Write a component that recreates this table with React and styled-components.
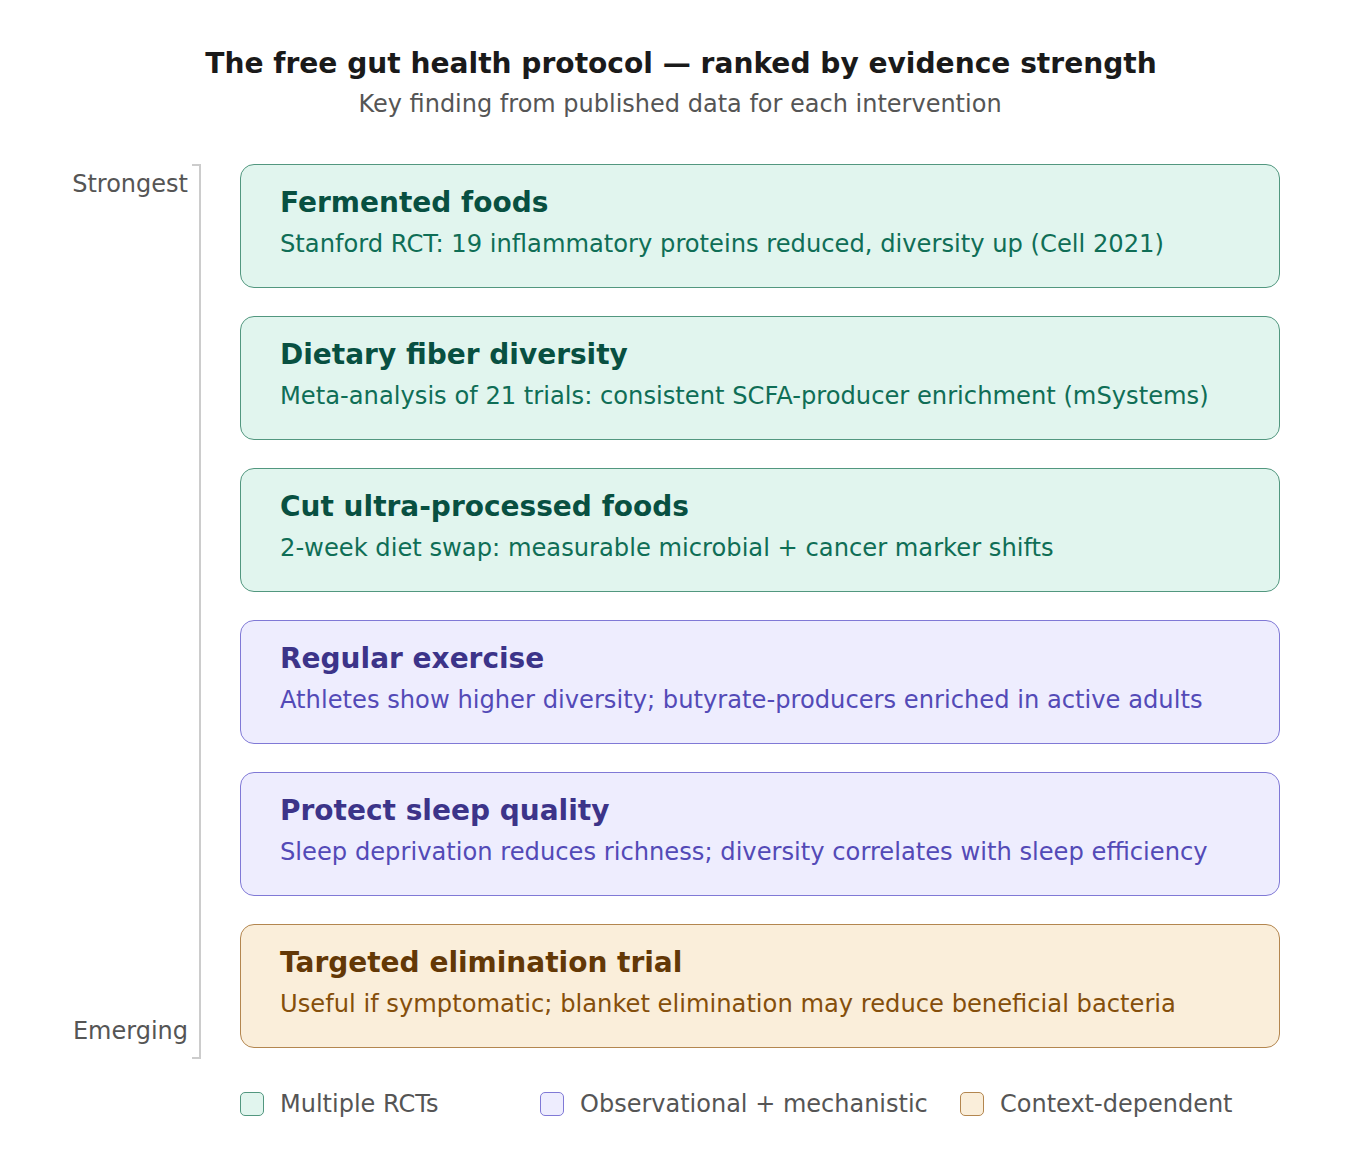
import styled, { createGlobalStyle } from "styled-components";

const GlobalStyle = createGlobalStyle`
  body {
    margin: 0;
    background: #ffffff;
    font-family: "DejaVu Sans", "Liberation Sans", sans-serif;
  }
`;

const tones = {
  green: { fill: "#e1f5ee", border: "#52977f", title: "#085041", text: "#0f6e56" },
  purple: { fill: "#eeedfe", border: "#8079d6", title: "#3c3489", text: "#534ab7" },
  amber: { fill: "#faeeda", border: "#b3864f", title: "#633806", text: "#854f0b" },
};

const PageStyle = styled.main`
  width: 1360px;
  padding: 46px 0 40px;
  box-sizing: border-box;
`;

const HeaderStyle = styled.header`
  text-align: center;
  margin-bottom: 45px;

  h1 {
    margin: 0;
    font-size: 28.1px;
    line-height: 36px;
    font-weight: 700;
    color: #1a1a1a;
    padding-left: 2px;
  }

  p {
    margin: 7px 0 0;
    font-size: 24px;
    line-height: 30px;
    color: #555555;
  }
`;

const BodyStyle = styled.section`
  display: flex;
  align-items: stretch;
`;

const ScaleStyle = styled.div`
  width: 200px;
  display: flex;
  justify-content: flex-end;
  flex-shrink: 0;
`;

const ScaleLabelsStyle = styled.div`
  display: flex;
  flex-direction: column;
  justify-content: space-between;
  align-items: flex-end;
  padding: 6px 4px 3px 0;
  font-size: 24px;
  line-height: 28px;
  color: #555555;
`;

const BracketStyle = styled.div`
  width: 7px;
  border: 2px solid #cccccc;
  border-left: none;
  margin-right: -1px;
  margin-bottom: -11px;
`;

const CardListStyle = styled.div`
  margin-left: 40px;
  width: 1040px;
  display: flex;
  flex-direction: column;
  gap: 28px;
`;

const CardStyle = styled.article`
  height: 124px;
  box-sizing: border-box;
  padding: 20px 39px 0;
  border-radius: 14px;
  border: 1px solid ${({ $tone }) => tones[$tone].border};
  background: ${({ $tone }) => tones[$tone].fill};

  h2 {
    margin: 0;
    font-size: 28px;
    line-height: 36px;
    font-weight: 700;
    color: ${({ $tone }) => tones[$tone].title};
  }

  p {
    margin: 8px 0 0;
    font-size: 24.2px;
    line-height: 30px;
    color: ${({ $tone }) => tones[$tone].text};
  }
`;

const LegendStyle = styled.footer`
  display: grid;
  grid-template-columns: 300px 420px auto;
  padding-left: 240px;
  margin-top: 42px;
`;

const LegendItemStyle = styled.div`
  display: flex;
  align-items: center;
  gap: 16px;
  font-size: 24px;
  line-height: 28px;
  color: #555555;
`;

const SwatchStyle = styled.span`
  width: 24px;
  height: 24px;
  box-sizing: border-box;
  border-radius: 5px;
  border: 1px solid ${({ $tone }) => tones[$tone].border};
  background: ${({ $tone }) => tones[$tone].fill};
`;

const items = [
  {
    tone: "green",
    title: "Fermented foods",
    text: "Stanford RCT: 19 inflammatory proteins reduced, diversity up (Cell 2021)",
  },
  {
    tone: "green",
    title: "Dietary fiber diversity",
    text: "Meta-analysis of 21 trials: consistent SCFA-producer enrichment (mSystems)",
  },
  {
    tone: "green",
    title: "Cut ultra-processed foods",
    text: "2-week diet swap: measurable microbial + cancer marker shifts",
  },
  {
    tone: "purple",
    title: "Regular exercise",
    text: "Athletes show higher diversity; butyrate-producers enriched in active adults",
  },
  {
    tone: "purple",
    title: "Protect sleep quality",
    text: "Sleep deprivation reduces richness; diversity correlates with sleep efficiency",
  },
  {
    tone: "amber",
    title: "Targeted elimination trial",
    text: "Useful if symptomatic; blanket elimination may reduce beneficial bacteria",
  },
];

const legend = [
  { tone: "green", label: "Multiple RCTs" },
  { tone: "purple", label: "Observational + mechanistic" },
  { tone: "amber", label: "Context-dependent" },
];

const App = () => {
  return (
    <PageStyle>
      <GlobalStyle />
      <HeaderStyle>
        <h1>The free gut health protocol — ranked by evidence strength</h1>
        <p>Key finding from published data for each intervention</p>
      </HeaderStyle>
      <BodyStyle>
        <ScaleStyle>
          <ScaleLabelsStyle>
            <span>Strongest</span>
            <span>Emerging</span>
          </ScaleLabelsStyle>
          <BracketStyle />
        </ScaleStyle>
        <CardListStyle>
          {items.map((item) => (
            <CardStyle key={item.title} $tone={item.tone}>
              <h2>{item.title}</h2>
              <p>{item.text}</p>
            </CardStyle>
          ))}
        </CardListStyle>
      </BodyStyle>
      <LegendStyle>
        {legend.map((entry) => (
          <LegendItemStyle key={entry.label}>
            <SwatchStyle $tone={entry.tone} />
            {entry.label}
          </LegendItemStyle>
        ))}
      </LegendStyle>
    </PageStyle>
  );
};

export default App;
